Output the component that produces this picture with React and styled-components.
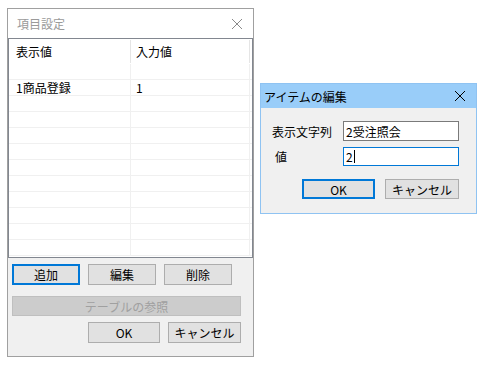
import React from 'react';
import styled, { createGlobalStyle, css } from 'styled-components';

const GlobalStyle = createGlobalStyle`
  html, body {
    margin: 0;
    padding: 0;
    background: #ffffff;
  }
  body {
    width: 498px;
    height: 371px;
    overflow: hidden;
    font-family: "Noto Sans CJK JP", "Noto Sans", sans-serif;
    font-size: 12px;
    color: #000000;
  }
`;

const Desktop = styled.div`
  position: relative;
  width: 498px;
  height: 371px;
`;

/* ---- windows ---- */

const Window = styled.div`
  position: absolute;
  left: ${(p) => p.$left}px;
  top: ${(p) => p.$top}px;
  width: ${(p) => p.$width}px;
  height: ${(p) => p.$height}px;
  box-sizing: border-box;
  display: flex;
  flex-direction: column;
  background: #f0f0f0;
  border: 1px solid ${(p) => (p.$active ? '#8fc3f2' : '#a0a0a0')};
`;

const TitleBar = styled.div`
  flex: none;
  display: flex;
  align-items: center;
  justify-content: space-between;
  height: ${(p) => p.$height}px;
  padding: 0 10px 0 ${(p) => p.$padLeft}px;
  background: ${(p) => (p.$active ? '#99cdf9' : '#ffffff')};
  color: ${(p) => (p.$active ? '#000000' : '#9a9a9a')};
  font-size: 12px;
`;

const CloseIcon = ({ color }) => (
  <svg width="12" height="12" viewBox="0 0 12 12">
    <path d="M1 1 L11 11 M11 1 L1 11" stroke={color} strokeWidth="1" fill="none" />
  </svg>
);

/* ---- list view ---- */

const ListView = styled.div`
  flex: none;
  height: 220px;
  box-sizing: border-box;
  border: 1px solid #828790;
  background: #ffffff;
  overflow: hidden;
`;

const HeaderRow = styled.div`
  display: grid;
  grid-template-columns: 122px 119px 1fr;
  height: 25px;
  align-items: center;
`;

const HeaderCell = styled.div`
  height: 23px;
  display: flex;
  align-items: center;
  padding-left: ${(p) => p.$pad}px;
  border-right: 1px solid #e5e5e5;
`;

const Row = styled.div`
  display: grid;
  grid-template-columns: 122px 119px;
  height: 16px;
  box-sizing: border-box;
  border-bottom: 1px solid #f0f0f0;
`;

const Cell = styled.div`
  display: flex;
  align-items: center;
  padding-left: ${(p) => p.$pad}px;
  border-right: 1px solid #f0f0f0;
  line-height: 15px;
`;

/* ---- buttons ---- */

const Button = styled.div`
  box-sizing: border-box;
  width: ${(p) => p.$width}px;
  height: ${(p) => p.$height || 21}px;
  display: flex;
  align-items: center;
  justify-content: center;
  background: #e1e1e1;
  border: 1px solid #adadad;
  font-size: 12px;
  ${(p) =>
    p.$default &&
    css`
      border: 2px solid #0078d7;
    `}
  ${(p) =>
    p.$disabled &&
    css`
      background: #cccccc;
      border-color: #bfbfbf;
      color: #a0a0a0;
    `}
`;

const ButtonRow = styled.div`
  display: flex;
  gap: ${(p) => p.$gap}px;
  justify-content: ${(p) => p.$justify || 'flex-start'};
  padding: ${(p) => p.$pad};
`;

/* ---- edit dialog ---- */

const FormGrid = styled.div`
  display: grid;
  grid-template-columns: 71px 116px;
  row-gap: 6px;
  padding: 13px 0 0 11px;
  align-items: center;
`;

const Label = styled.div`
  padding-left: ${(p) => p.$pad || 0}px;
`;

const TextBox = styled.div`
  box-sizing: border-box;
  height: ${(p) => p.$height}px;
  display: flex;
  align-items: center;
  padding-left: 2px;
  background: #ffffff;
  border: 1px solid ${(p) => (p.$focused ? '#0078d7' : '#7a7a7a')};
`;

const Caret = styled.span`
  display: inline-block;
  width: 1px;
  height: 13px;
  margin-left: 1px;
  background: #000000;
`;

const rows = Array.from({ length: 12 }, (_, i) =>
  i === 1 ? { label: '1商品登録', value: '1' } : { label: '', value: '' }
);

export default function App() {
  return (
    <>
      <GlobalStyle />
      <Desktop>
        <Window $left={7} $top={8} $width={247} $height={349}>
          <TitleBar $height={29} $padLeft={9}>
            <span>項目設定</span>
            <CloseIcon color="#8a8a8a" />
          </TitleBar>
          <ListView>
            <HeaderRow>
              <HeaderCell $pad={7}>表示値</HeaderCell>
              <HeaderCell $pad={5}>入力値</HeaderCell>
            </HeaderRow>
            {rows.map((r, i) => (
              <Row key={i}>
                <Cell $pad={7}>{r.label}</Cell>
                <Cell $pad={5}>{r.value}</Cell>
              </Row>
            ))}
          </ListView>
          <ButtonRow $gap={8} $pad="6px 0 0 4px">
            <Button $width={68} $default>追加</Button>
            <Button $width={68}>編集</Button>
            <Button $width={68}>削除</Button>
          </ButtonRow>
          <ButtonRow $gap={0} $pad="11px 0 0 4px">
            <Button $width={229} $height={20} $disabled>テーブルの参照</Button>
          </ButtonRow>
          <ButtonRow $gap={8} $pad="6px 0 0 80px">
            <Button $width={72}>OK</Button>
            <Button $width={73}>キャンセル</Button>
          </ButtonRow>
        </Window>

        <Window $left={260} $top={83} $width={217} $height={131} $active>
          <TitleBar $height={24} $padLeft={3} $active>
            <span>アイテムの編集</span>
            <CloseIcon color="#000000" />
          </TitleBar>
          <FormGrid>
            <Label>表示文字列</Label>
            <TextBox $height={20}>2受注照会</TextBox>
            <Label $pad={3}>値</Label>
            <TextBox $height={19} $focused>
              2<Caret />
            </TextBox>
          </FormGrid>
          <ButtonRow $gap={10} $pad="13px 0 0 41px">
            <Button $width={73} $height={20} $default>OK</Button>
            <Button $width={74} $height={20}>キャンセル</Button>
          </ButtonRow>
        </Window>
      </Desktop>
    </>
  );
}
